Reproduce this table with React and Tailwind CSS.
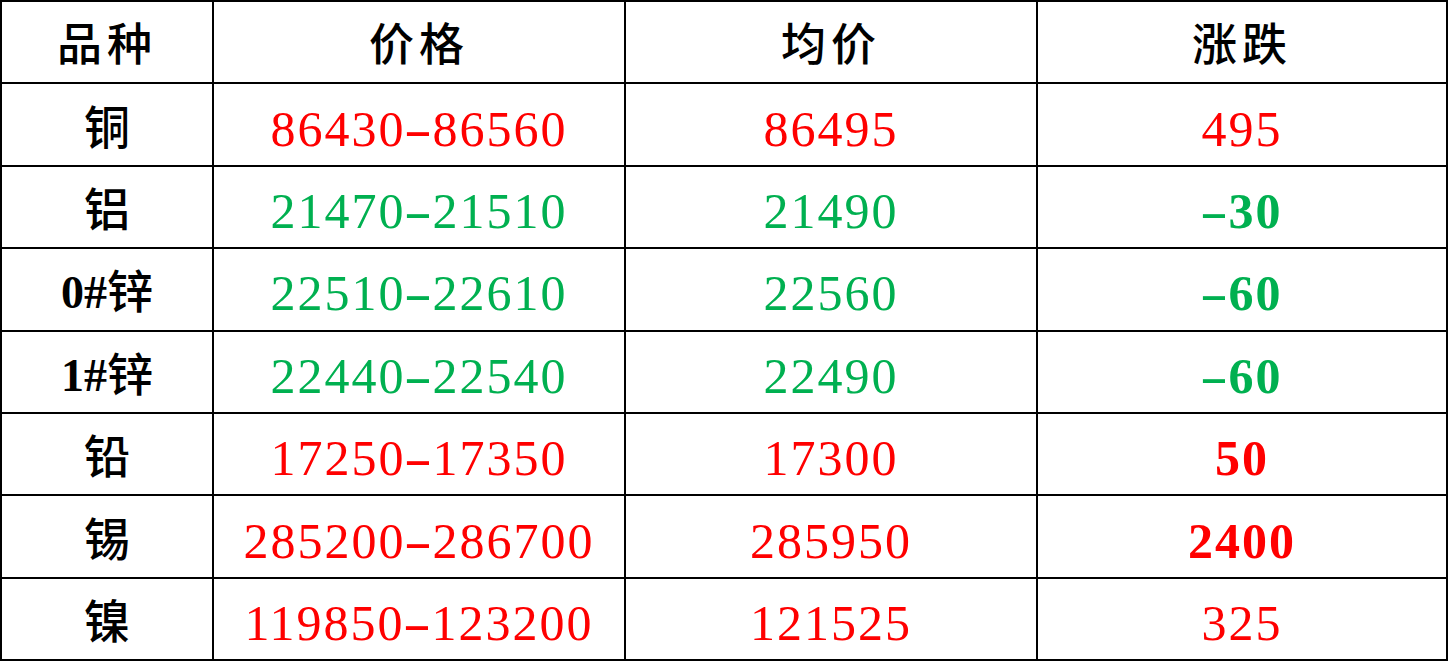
import React from "react";

const RED = "text-[#ff0000]";
const GREEN = "text-[#00b050]";

const rows = [
  { name: "铜", lo: "86430", hi: "86560", avg: "86495", chg: "495", up: true, bold: false },
  { name: "铝", lo: "21470", hi: "21510", avg: "21490", chg: "-30", up: false, bold: true },
  { name: "0#锌", lo: "22510", hi: "22610", avg: "22560", chg: "-60", up: false, bold: true },
  { name: "1#锌", lo: "22440", hi: "22540", avg: "22490", chg: "-60", up: false, bold: true },
  { name: "铅", lo: "17250", hi: "17350", avg: "17300", chg: "50", up: true, bold: true },
  { name: "锡", lo: "285200", hi: "286700", avg: "285950", chg: "2400", up: true, bold: true },
  { name: "镍", lo: "119850", hi: "123200", avg: "121525", chg: "325", up: true, bold: false },
];

const font = { fontFamily: '"Liberation Serif", "Noto Sans CJK SC", serif' };

function Cell({ children, className = "" }) {
  return (
    <div className={"bg-white flex items-center justify-center pt-[8px] " + className}>
      {children}
    </div>
  );
}

function Num({ text, className = "" }) {
  return (
    <span className={"text-[50px] leading-none tracking-[2px] " + className}>
      {text.split("").map((c, i) =>
        c === "-" ? (
          <span key={i} className="inline-block w-[27px] text-center scale-x-[1.7] font-normal">-</span>
        ) : (
          <span key={i}>{c}</span>
        )
      )}
    </span>
  );
}

function Name({ text }) {
  const m = text.match(/^([0-9#]*)(.*)$/);
  return (
    <span className="text-[46px] leading-none text-black">
      {m[1] && <span className="font-bold">{m[1]}</span>}
      <span className="font-medium">{m[2]}</span>
    </span>
  );
}

export default function App() {
  return (
    <div className="w-[1450px] h-[661px] bg-white" style={font}>
      <div className="grid grid-cols-[210px_410px_410px_408px] auto-rows-[80.4px] gap-[2px] p-[2px] bg-black w-[1448px]">
        {["品种", "价格", "均价", "涨跌"].map((h) => (
          <Cell key={h}>
            <span className="text-[45px] leading-none font-medium tracking-[5px] text-black">{h}</span>
          </Cell>
        ))}
        {rows.map((r) => {
          const color = r.up ? RED : GREEN;
          return (
            <React.Fragment key={r.name + r.lo}>
              <Cell>
                <Name text={r.name} />
              </Cell>
              <Cell>
                <Num text={`${r.lo}-${r.hi}`} className={color} />
              </Cell>
              <Cell>
                <Num text={r.avg} className={color} />
              </Cell>
              <Cell>
                <Num text={r.chg} className={color + (r.bold ? " font-bold" : "")} />
              </Cell>
            </React.Fragment>
          );
        })}
      </div>
    </div>
  );
}
